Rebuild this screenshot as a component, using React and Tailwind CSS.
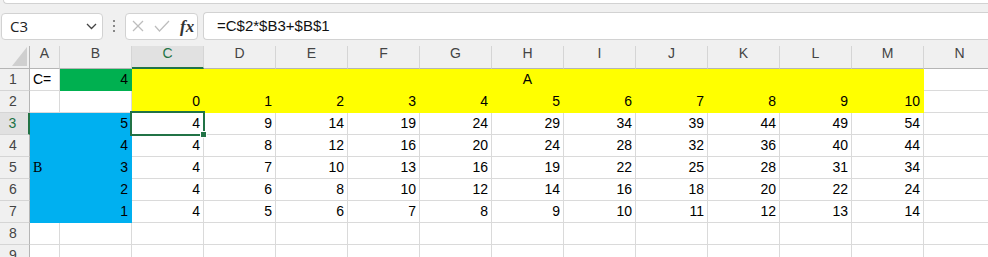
import React from "react";

const COLS = ["A", "B", "C", "D", "E", "F", "G", "H", "I", "J", "K", "L", "M", "N"];
const HEADS = [0, 1, 2, 3, 4, 5, 6, 7, 8, 9, 10];
const BVALS = [5, 4, 3, 2, 1];

const cell = "border-r border-b border-[#dadada] bg-white";
const num = "flex items-center justify-end pr-[3px]";

const Corner = () => (
  <div className="border-r border-b border-r-[#b5b5b5] border-b-[#b5b5b5] bg-[#f0f0f0] relative">
    <svg className="absolute left-[12px] top-[1px]" width="15" height="19" viewBox="0 0 15 19">
      <polygon points="15,0 15,19 0,19" fill="#cfcfcf" />
    </svg>
  </div>
);

const ColHead = ({ label, active }) => (
  <div
    className={
      active
        ? "bg-[#e1e1e1] border-r border-r-[#d5d5d5] border-b-2 border-b-[#217346] flex justify-center text-[#217346] leading-[14px]"
        : "bg-[#f0f0f0] border-r border-r-[#d5d5d5] border-b border-b-[#b5b5b5] flex justify-center text-[#444] leading-[14px]"
    }
  >
    {label}
  </div>
);

const RowHead = ({ n, active }) => (
  <div
    className={
      active
        ? "bg-[#e1e1e1] border-r-2 border-r-[#217346] border-b border-b-[#d5d5d5] flex items-center justify-center pr-[3px] text-[#217346]"
        : "bg-[#f0f0f0] border-r border-r-[#b5b5b5] border-b border-b-[#d5d5d5] flex items-center justify-center pr-[3px] text-[#444]"
    }
  >
    {n}
  </div>
);

export default function App() {
  return (
    <div className="w-[988px] h-[257px] overflow-hidden bg-[#f0f0f0] font-['Liberation_Sans',Arial,sans-serif]">
      {/* ribbon edge */}
      <div className="h-[4px] ml-[3px] bg-white border-b border-l border-[#d2d2d2] rounded-bl-[6px]" />

      {/* formula bar */}
      <div className="flex items-center h-[28px] mt-[8px]">
        <div className="ml-[1px] w-[102px] h-[27px] bg-white border border-[#d2d2d2] rounded-[4px] flex items-center justify-between pl-[8px] pr-[5px] font-['Open_Sans',sans-serif] text-[15px] text-[#222]">
          <span>C3</span>
          <svg width="11" height="7" viewBox="0 0 11 7" fill="none" stroke="#444" strokeWidth="1.3">
            <polyline points="1,1 5.5,5.5 10,1" />
          </svg>
        </div>
        <div className="w-[22px] flex flex-col items-center gap-[3px]">
          <span className="w-[2px] h-[2px] bg-[#888]" />
          <span className="w-[2px] h-[2px] bg-[#888]" />
          <span className="w-[2px] h-[2px] bg-[#888]" />
        </div>
        <div className="w-[73px] h-[27px] bg-white border border-[#d2d2d2] rounded-[4px] flex items-center pl-[6px]">
          <svg width="12" height="12" viewBox="0 0 12 12" stroke="#bdbdbd" strokeWidth="1.2">
            <line x1="1" y1="1" x2="11" y2="11" />
            <line x1="11" y1="1" x2="1" y2="11" />
          </svg>
          <svg className="ml-[10px]" width="16" height="12" viewBox="0 0 16 12" fill="none" stroke="#bdbdbd" strokeWidth="1.2">
            <polyline points="1,6 5.5,11 15,1" />
          </svg>
          <span className="ml-[10px] font-['Liberation_Serif',serif] italic font-bold text-[17px] text-[#333] leading-none">fx</span>
        </div>
        <div className="ml-[5px] flex-1 h-[28px] bg-white border-y border-l border-[#d2d2d2] rounded-l-[4px] flex items-center pl-[13px] text-[15px] text-[#111]">
          =C$2*$B3+$B$1
        </div>
      </div>

      {/* sheet */}
      <div className="relative mt-[6px]">
        <div className="grid grid-cols-[30px_30px_72px_repeat(12,72px)] grid-rows-[23px_repeat(9,22px)] text-[14px] text-black">
          <Corner />
          {COLS.map((c) => (
            <ColHead key={c} label={c} active={c === "C"} />
          ))}

          {/* row 1 */}
          <RowHead n={1} />
          <div className={cell + " flex items-center pl-[3px]"}>C=</div>
          <div className={"border-r border-b border-[#00b050] bg-[#00b050] " + num}>4</div>
          <div className="col-span-11 bg-[#ffff00] border-r border-b border-[#ffff00] flex items-center justify-center">A</div>
          <div className={cell} />

          {/* row 2 */}
          <RowHead n={2} />
          <div className={cell} />
          <div className={cell} />
          {HEADS.map((h) => (
            <div key={h} className={"bg-[#ffff00] border-r border-b border-[#ffff00] " + num}>
              {h}
            </div>
          ))}
          <div className={cell} />

          {/* rows 3-7 */}
          {BVALS.map((b, i) => (
            <React.Fragment key={b}>
              <RowHead n={i + 3} active={i === 0} />
              {i === 0 && (
                <div className="row-span-5 bg-[#00b0f0] border-b border-[#00b0f0] flex items-center pl-[3px] font-['Liberation_Serif',serif]">
                  B
                </div>
              )}
              <div className={"bg-[#00b0f0] border-r border-b border-[#00b0f0] " + num}>{b}</div>
              {HEADS.map((h) => (
                <div key={h} className={cell + " " + num}>
                  {h * b + 4}
                </div>
              ))}
              <div className={cell} />
            </React.Fragment>
          ))}

          {/* rows 8-9 */}
          {[8, 9].map((r) => (
            <React.Fragment key={r}>
              <RowHead n={r} />
              {COLS.map((c) => (
                <div key={c} className={cell} />
              ))}
            </React.Fragment>
          ))}
        </div>

        {/* active cell C3 */}
        <div className="absolute left-[130px] top-[65px] w-[75px] h-[25px] border-2 border-[#217346]" />
        <div className="absolute left-[200px] top-[85px] w-[7px] h-[7px] bg-[#217346] border border-white" />
      </div>
    </div>
  );
}
